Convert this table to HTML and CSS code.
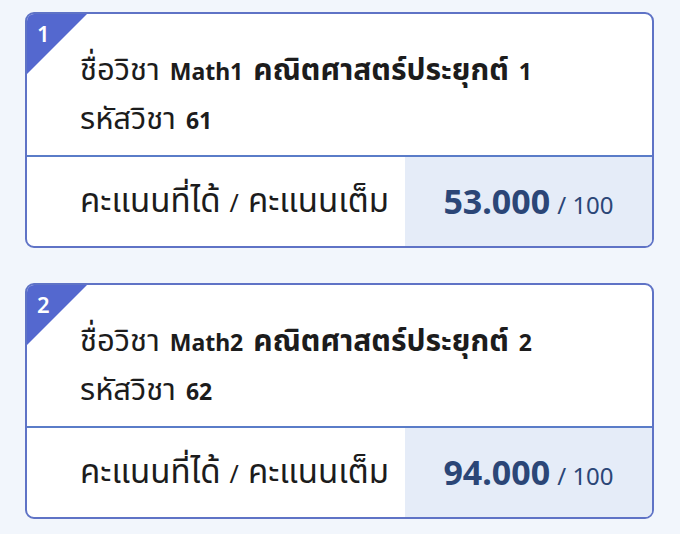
FILE: index.html
```html
<!DOCTYPE html>
<html lang="th">
<head>
  <meta charset="UTF-8">
  <title>ผลการเรียน</title>
  <link rel="stylesheet" href="styles.css">
</head>
<body>

  <div class="list">
    <div class="card">
      <span class="badge"></span>
      <span class="badge-num">1</span>
      <div class="info">
        <div class="subject"><span class="th">ชื่อวิชา</span> <b>Math1 <span class="th">คณิตศาสตร์ประยุกต์</span> 1</b></div>
        <div class="code"><span class="th">รหัสวิชา</span> <b>61</b></div>
      </div>
      <div class="score-row">
        <div class="score-label"><span class="th">คะแนนที่ได้</span> / <span class="th">คะแนนเต็ม</span></div>
        <div class="score-value"><b>53.000</b> / 100</div>
      </div>
    </div>

    <div class="card">
      <span class="badge"></span>
      <span class="badge-num">2</span>
      <div class="info">
        <div class="subject"><span class="th">ชื่อวิชา</span> <b>Math2 <span class="th">คณิตศาสตร์ประยุกต์</span> 2</b></div>
        <div class="code"><span class="th">รหัสวิชา</span> <b>62</b></div>
      </div>
      <div class="score-row">
        <div class="score-label"><span class="th">คะแนนที่ได้</span> / <span class="th">คะแนนเต็ม</span></div>
        <div class="score-value"><b>94.000</b> / 100</div>
      </div>
    </div>
  </div>

</body>
</html>
```

FILE: styles.css
```css
body {
  margin: 0;
  font-family: "Noto Sans", "Noto Sans Thai", sans-serif;
  background-color: #f2f6fc;
  color: #1c1c1c;
}

.list {
  display: flex;
  flex-direction: column;
  gap: 35px;
  padding: 12px 26px 0 25px;
}

.card {
  position: relative;
  height: 236px;
  box-sizing: border-box;
  background: white;
  border: 2px solid #5f73c6;
  border-radius: 9px;
  overflow: hidden;
  display: flex;
  flex-direction: column;
}

.badge {
  position: absolute;
  top: 0;
  left: 0;
  width: 60px;
  height: 60px;
  background: #5468cf;
  clip-path: polygon(0 0, 100% 0, 0 100%);
}

.badge-num {
  position: absolute;
  top: 4px;
  left: 10px;
  color: white;
  font-size: 22px;
  font-weight: 600;
  line-height: 30px;
}

.info {
  height: 143px;
  box-sizing: border-box;
  padding: 31px 0 0 53px;
  font-size: 23px;
  line-height: 46px;
  word-spacing: 4px;
  border-bottom: 2px solid #5a7cc8;
}

.info .th {
  font-size: 31px;
}

.info b .th {
  font-size: 30px;
}

.info b {
  font-weight: 700;
}

.score-row {
  flex: 1;
  display: flex;
}

.score-label {
  flex: 1;
  display: flex;
  align-items: center;
  gap: 9px;
  padding-left: 53px;
  font-size: 25px;
}

.score-label .th {
  font-size: 33px;
}

.score-value {
  width: 247px;
  background: #e5ecf8;
  display: flex;
  align-items: baseline;
  justify-content: center;
  padding-top: 21px;
  box-sizing: border-box;
  gap: 7px;
  font-size: 24px;
  color: #2b4677;
}

.score-value b {
  font-size: 34px;
}
```
